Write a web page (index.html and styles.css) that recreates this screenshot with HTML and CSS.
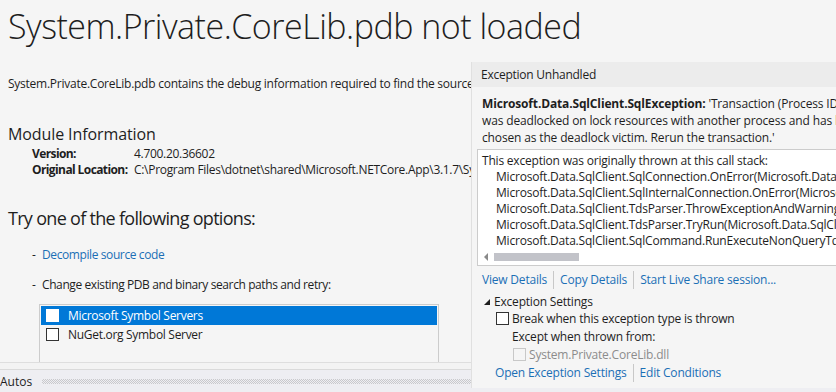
FILE: index.html
```html
<!DOCTYPE html>
<html lang="en">
<head>
  <meta charset="UTF-8" />
  <meta name="viewport" content="width=device-width, initial-scale=1.0"/>
  <link rel="stylesheet" href="styles.css">
</head>
<body>
  <div class="ide">

    <!-- Source not found document -->
    <div class="doc">
      <main class="doc-page">
        <h1 class="doc-title">System.Private.CoreLib.pdb not loaded</h1>
        <p class="doc-intro">System.Private.CoreLib.pdb contains the debug information required to find the source code for the module System.Private.CoreLib.dll</p>

        <h2 class="doc-heading">Module Information</h2>
        <dl class="module-info">
          <dt>Version:</dt>
          <dd>4.700.20.36602</dd>
          <dt>Original Location:</dt>
          <dd>C:\Program Files\dotnet\shared\Microsoft.NETCore.App\3.1.7\System.Private.CoreLib.pdb</dd>
        </dl>

        <h2 class="doc-options">Try one of the following options:</h2>
        <ul class="options">
          <li><a href="#" class="link">Decompile source code</a></li>
          <li>Change existing PDB and binary search paths and retry:</li>
        </ul>

        <div class="symbol-list">
          <label class="symbol-row selected"><span class="check"></span>Microsoft Symbol Servers</label>
          <label class="symbol-row"><span class="check"></span>NuGet.org Symbol Server</label>
        </div>
      </main>
    </div>
    <div class="doc-hscroll"></div>

    <!-- Autos tool window tab -->
    <div class="autos">
      <span>Autos</span>
      <span class="grip"></span>
    </div>

    <!-- Exception helper -->
    <section class="exception">
      <header class="exception-title">Exception Unhandled</header>
      <div class="exception-body">
        <p class="exception-msg"><b>Microsoft.Data.SqlClient.SqlException:</b> 'Transaction (Process ID 65)<br>was deadlocked on lock resources with another process and has been<br>chosen as the deadlock victim. Rerun the transaction.'</p>

        <div class="stack">
          <div class="stack-text">
            <div>This exception was originally thrown at this call stack:</div>
            <div class="frame">Microsoft.Data.SqlClient.SqlConnection.OnError(Microsoft.Data.SqlClient.SqlException, bool, System.Action)</div>
            <div class="frame">Microsoft.Data.SqlClient.SqlInternalConnection.OnError(Microsoft.Data.SqlClient.SqlException, bool)</div>
            <div class="frame">Microsoft.Data.SqlClient.TdsParser.ThrowExceptionAndWarning(Microsoft.Data.SqlClient.TdsParserStateObject)</div>
            <div class="frame">Microsoft.Data.SqlClient.TdsParser.TryRun(Microsoft.Data.SqlClient.RunBehavior)</div>
            <div class="frame">Microsoft.Data.SqlClient.SqlCommand.RunExecuteNonQueryTds(string, bool, int, bool)</div>
          </div>
          <div class="hscroll">
            <span class="arrow"></span>
            <span class="thumb"></span>
          </div>
        </div>

        <div class="links">
          <a href="#" class="link">View Details</a>
          <a href="#" class="link">Copy Details</a>
          <a href="#" class="link">Start Live Share session...</a>
        </div>

        <div class="settings">
          <div class="settings-title"><span class="caret"></span>Exception Settings</div>
          <label class="setting"><span class="check"></span>Break when this exception type is thrown</label>
          <div class="setting-sub">Except when thrown from:</div>
          <label class="setting disabled"><span class="check"></span>System.Private.CoreLib.dll</label>
        </div>

        <div class="links bottom-links">
          <a href="#" class="link">Open Exception Settings</a>
          <a href="#" class="link">Edit Conditions</a>
        </div>
      </div>
    </section>

  </div>
</body>
</html>
```

FILE: styles.css
```css
* {
  margin: 0;
  padding: 0;
  box-sizing: border-box;
}

html, body {
  height: 100%;
  overflow: hidden;
}

body {
  font-family: "Open Sans", "Noto Sans", sans-serif;
  font-size: 12px;
  color: #1e1e1e;
  background: #f5f5f5;
}

.link {
  color: #1b6fb5;
  text-decoration: none;
}

.ide {
  position: relative;
  height: 100%;
  display: flex;
  flex-direction: column;
}

/* left document */
.doc {
  height: 363px;
  overflow: hidden;
  border-bottom: 1px solid #dedede;
}

.doc-page {
  padding: 4px 0 0 8px;
  white-space: nowrap;
}

.doc-title {
  font-size: 34px;
  font-weight: 300;
  line-height: 44px;
  letter-spacing: -0.5px;
  color: #1e1e1e;
}

.doc-intro {
  margin-top: 28px;
  letter-spacing: -0.25px;
  line-height: 16px;
}

.doc-heading {
  margin-top: 32px;
  font-size: 16px;
  font-weight: 400;
  line-height: 20px;
  letter-spacing: -0.1px;
}

.module-info {
  display: grid;
  grid-template-columns: 102px auto;
  padding-left: 24px;
  line-height: 16px;
  margin-top: 2px;
  letter-spacing: -0.3px;
}

.module-info dt {
  font-weight: 700;
  letter-spacing: -0.6px;
}

.doc-options {
  margin-top: 28px;
  font-size: 18px;
  font-weight: 400;
  line-height: 24px;
  letter-spacing: -0.7px;
}

.options {
  list-style: none;
  padding-left: 24px;
  letter-spacing: -0.4px;
}

.options li {
  line-height: 16px;
  margin-top: 14px;
}

.options li:first-child {
  margin-top: 17px;
}

.options li::before {
  content: "-";
  display: inline-block;
  width: 10px;
}

.symbol-list {
  margin: 11px 0 0 31px;
  width: 400px;
  height: 58px;
  border: 1px solid #cccccc;
  border-bottom: none;
  padding: 1px;
  display: flex;
  flex-direction: column;
  letter-spacing: -0.3px;
}

.symbol-row {
  display: flex;
  align-items: center;
  gap: 9px;
  height: 19px;
  padding-left: 5px;
}

.symbol-row.selected {
  background: #0078d7;
  color: #fff;
}

.check {
  width: 13px;
  height: 13px;
  border: 1px solid #333;
  background: #fff;
  flex: none;
}

.symbol-row.selected .check {
  border-color: #fff;
}

.doc-hscroll {
  height: 6px;
  background: #f3f3f3;
}

/* autos tab strip */
.autos {
  flex: 1;
  display: flex;
  align-items: center;
  gap: 10px;
  background: #eeeef2;
  border-top: 1px solid #dadada;
  color: #1e1e1e;
}

.grip {
  width: 432px;
  height: 5px;
  background-image: conic-gradient(#c9c9cc 25%, transparent 0 50%, #c9c9cc 0 75%, transparent 0);
  background-size: 2px 2px;
}

/* exception helper popup */
.exception {
  position: absolute;
  left: 471px;
  top: 62px;
  width: 365px;
  height: 326px;
  background: #f5f5f5;
  border-left: 1px solid #e0e0e0;
  overflow: hidden;
}

.exception-title {
  height: 25px;
  line-height: 25px;
  padding-left: 9px;
  background: #ececec;
  letter-spacing: -0.25px;
}

.exception-body {
  padding: 8px 0 0 5px;
}

.exception-msg {
  width: 420px;
  padding-left: 5px;
  font-size: 12px;
  line-height: 17px;
  letter-spacing: -0.15px;
  white-space: nowrap;
}

.stack {
  margin-top: 3px;
  width: 380px;
  background: #fff;
  border: 1px solid #cccccc;
  border-right: none;
  overflow: hidden;
}

.stack-text {
  padding: 3px 0 0 4px;
  font-size: 12px;
  line-height: 16px;
  white-space: nowrap;
  letter-spacing: -0.2px;
}

.frame {
  padding-left: 14px;
}

.hscroll {
  display: flex;
  align-items: center;
  gap: 6px;
  height: 16px;
  padding-left: 6px;
}

.arrow {
  width: 0;
  height: 0;
  border-top: 4px solid transparent;
  border-bottom: 4px solid transparent;
  border-right: 4px solid #8a8a8a;
}

.thumb {
  width: 85px;
  height: 8px;
  background: #c2c3c9;
}

.links {
  display: flex;
  align-items: center;
  margin-top: 5px;
  padding-left: 5px;
  font-size: 12px;
  line-height: 18px;
  letter-spacing: -0.2px;
}

.links .link + .link {
  border-left: 1px solid #c8c8c8;
  margin-left: 6px;
  padding-left: 6px;
}

.settings {
  margin-top: 4px;
  font-size: 12px;
  line-height: 17px;
  letter-spacing: -0.2px;
}

.settings-title {
  display: flex;
  align-items: center;
  gap: 4px;
  padding-left: 7px;
}

.caret {
  width: 0;
  height: 0;
  border-left: 6px solid transparent;
  border-bottom: 6px solid #1e1e1e;
}

.setting {
  display: flex;
  align-items: center;
  gap: 3px;
  padding-left: 19px;
}

.setting-sub {
  padding-left: 35px;
  margin-top: 1px;
}

.setting.disabled {
  margin-top: 1px;
  padding-left: 36px;
  color: #8c8c8c;
}

.setting.disabled .check {
  border-color: #c8c8c8;
  background: #f5f5f5;
}

.bottom-links {
  margin-top: 1px;
  padding-left: 18px;
}
```
